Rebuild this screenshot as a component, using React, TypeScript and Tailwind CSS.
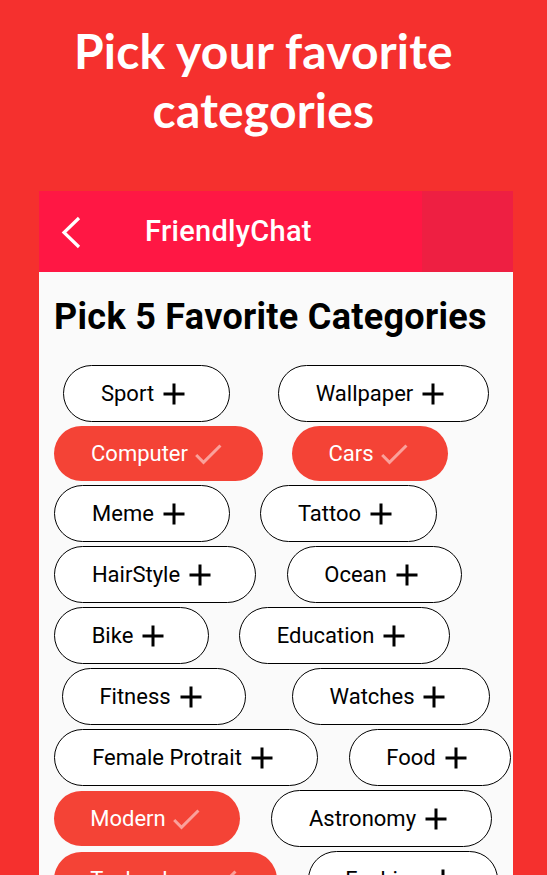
import React from "react";

type Chip = { label: string; w: number; sel?: boolean; ml: number };

const rows: Chip[][] = [
  [
    { label: "Sport", w: 167, ml: 24 },
    { label: "Wallpaper", w: 211, ml: 48 },
  ],
  [
    { label: "Computer", w: 209, ml: 15, sel: true },
    { label: "Cars", w: 156, ml: 29, sel: true },
  ],
  [
    { label: "Meme", w: 176, ml: 15 },
    { label: "Tattoo", w: 177, ml: 30 },
  ],
  [
    { label: "HairStyle", w: 202, ml: 15 },
    { label: "Ocean", w: 175, ml: 31 },
  ],
  [
    { label: "Bike", w: 155, ml: 15 },
    { label: "Education", w: 211, ml: 30 },
  ],
  [
    { label: "Fitness", w: 184, ml: 23 },
    { label: "Watches", w: 198, ml: 46 },
  ],
  [
    { label: "Female Protrait", w: 264, ml: 15 },
    { label: "Food", w: 162, ml: 31 },
  ],
  [
    { label: "Modern", w: 186, ml: 15, sel: true },
    { label: "Astronomy", w: 221, ml: 31 },
  ],
  [
    { label: "Technology", w: 223, ml: 15, sel: true },
    { label: "Fashion", w: 190, ml: 31 },
  ],
];

function PlusIcon() {
  return (
    <svg width="36" height="36" viewBox="0 0 24 24" className="shrink-0">
      <path d="M19 13h-6v6h-2v-6H5v-2h6V5h2v6h6v2z" fill="#000" />
    </svg>
  );
}

function CheckIcon() {
  return (
    <svg width="36" height="36" viewBox="0 0 24 24" className="shrink-0">
      <path
        d="M9 16.17L4.83 12l-1.42 1.41L9 19 21 7l-1.41-1.41z"
        fill="rgba(255,255,255,0.5)"
      />
    </svg>
  );
}

function ChipView({ c }: { c: Chip }) {
  return (
    <div
      className={
        c.sel
          ? "flex h-[55px] shrink-0 items-center justify-center gap-[2px] rounded-full bg-[#f44336] text-white"
          : "flex h-[57px] shrink-0 items-center justify-center gap-[2px] rounded-full border-[1.5px] border-black bg-white text-black"
      }
      style={{ width: c.w, marginLeft: c.ml }}
    >
      <span className="text-[22px] leading-none">{c.label}</span>
      {c.sel ? <CheckIcon /> : <PlusIcon />}
    </div>
  );
}

export default function App() {
  return (
    <div className="flex h-[875px] w-full flex-col overflow-hidden bg-[#f5302e]">
      <h1 className="pr-[20px] pt-[21px] text-center font-['Lato',sans-serif] text-[48px] font-bold leading-[59px] tracking-[0.2px] text-white">
        Pick your favorite
        <br />
        categories
      </h1>
      <div className="ml-[39px] mt-[52px] flex w-[474px] flex-1 flex-col bg-[#fafafa] font-['Roboto',sans-serif]">
        <div className="flex h-[81px] w-full bg-[#ff1744]">
          <div className="flex flex-1 items-center">
            <svg width="24" height="34" viewBox="0 0 24 34" className="ml-[21px]">
              <polyline
                points="19,3 4,17.5 19,32"
                fill="none"
                stroke="#fff"
                strokeWidth="3.2"
              />
            </svg>
            <span className="ml-[61px] text-[29px] font-medium tracking-[0.3px] text-white">FriendlyChat</span>
          </div>
          <div className="h-full w-[91px] bg-[#ee1f42]" />
        </div>
        <h2 className="ml-[15px] mt-[25px] text-[36px] font-bold leading-[40px] tracking-[0.3px] text-black">
          Pick 5 Favorite Categories
        </h2>
        <div className="mt-[28px] flex flex-col gap-[4px]">
          {rows.map((r, i) => (
            <div key={i} className="flex items-center">
              {r.map((c) => (
                <ChipView key={c.label} c={c} />
              ))}
            </div>
          ))}
        </div>
      </div>
    </div>
  );
}
